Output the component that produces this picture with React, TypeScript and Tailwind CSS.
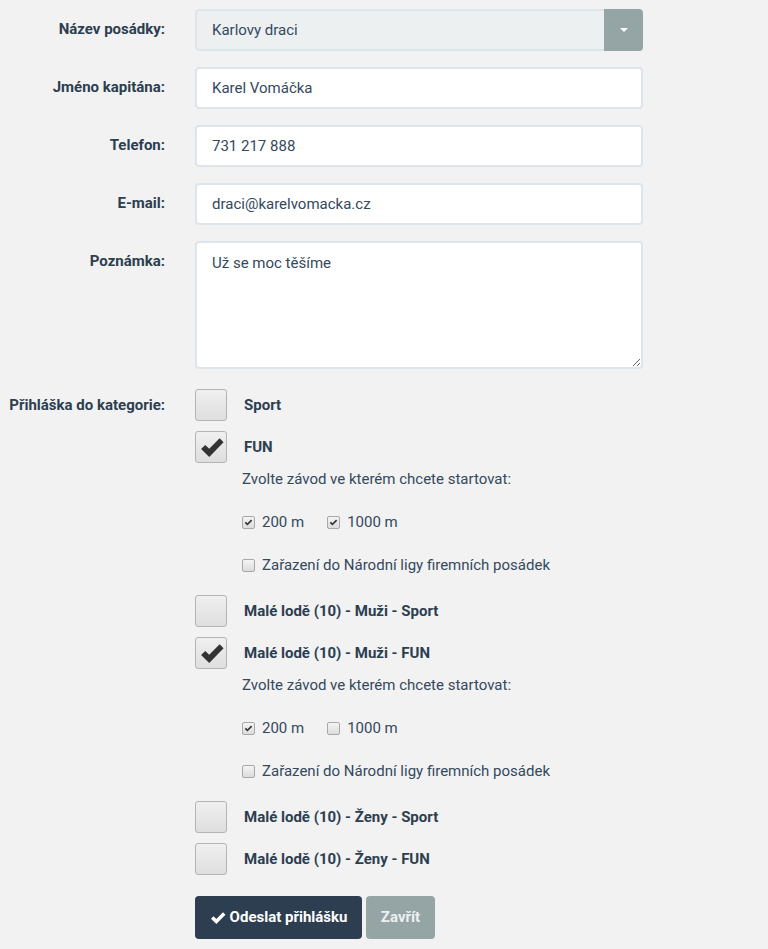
import React from "react";

const font = { fontFamily: "Roboto, 'Noto Sans', sans-serif" };

function BigCheck({ checked }: { checked?: boolean }) {
  return (
    <span className="flex h-[32px] w-[32px] shrink-0 items-center justify-center rounded-[3px] border border-[#b4b4b4] bg-gradient-to-b from-[#f0f0f0] to-[#dedede]">
      {checked && (
        <svg viewBox="0 0 24 24" className="h-[25px] w-[25px]" fill="#333">
          <path d="M2 13.4 L6 9.5 L9.8 13.3 L19.8 3 L23.6 7 L9.8 21 Z" />
        </svg>
      )}
    </span>
  );
}

function SmallCheck({ checked }: { checked?: boolean }) {
  return (
    <span className="flex h-[13px] w-[13px] shrink-0 items-center justify-center rounded-[2px] border border-[#a8a8a8] bg-gradient-to-b from-[#f4f4f4] to-[#dcdcdc]">
      {checked && (
        <svg viewBox="0 0 12 12" className="h-[9px] w-[9px]" fill="#333">
          <path d="M1 6.5 L2.6 5 L4.6 7 L9.4 2 L11 3.6 L4.6 10 Z" />
        </svg>
      )}
    </span>
  );
}

function Row({ label, children }: { label: string; children: React.ReactNode }) {
  return (
    <div className="flex items-start">
      <div className="w-[165px] shrink-0 pt-[10px] text-right text-[15px] font-bold leading-[20px] text-[#2c3e50]">
        {label}
      </div>
      <div className="ml-[30px] w-[448px]">{children}</div>
    </div>
  );
}

const inputCls =
  "block h-[42px] w-full rounded-[4px] border-2 border-[#dce4ec] bg-white px-[15px] text-[15px] text-[#34495e] outline-none";

function Category({ label, checked }: { label: string; checked?: boolean }) {
  return (
    <div className="mt-[10px] flex items-center first:mt-0">
      <BigCheck checked={checked} />
      <span className="ml-[17px] text-[15px] font-bold leading-[20px] text-[#2c3e50]">{label}</span>
    </div>
  );
}

function Races({ k1000 }: { k1000: boolean }) {
  return (
    <div className="pl-[47px] text-[15px] leading-[20px] text-[#34495e]">
      <div className="mt-[6px]">Zvolte závod ve kterém chcete startovat:</div>
      <div className="mt-[23px] flex items-center">
        <SmallCheck checked />
        <span className="ml-[7px]">200 m</span>
        <span className="ml-[23px]">
          <SmallCheck checked={k1000} />
        </span>
        <span className="ml-[7px]">1000 m</span>
      </div>
      <div className="mt-[23px] flex items-center">
        <SmallCheck />
        <span className="ml-[7px]">Zařazení do Národní ligy firemních posádek</span>
      </div>
      <div className="h-[10px]" />
    </div>
  );
}

export default function App() {
  return (
    <div className="min-h-screen bg-[#f2f2f2] pt-[9px]" style={font}>
      <div className="flex flex-col gap-[16px]">
        <Row label="Název posádky:">
          <div className="flex h-[42px] w-full overflow-hidden rounded-[4px]">
            <div className="flex flex-1 items-center rounded-l-[4px] border-2 border-r-0 border-[#dce4ec] bg-[#ecf0f1] px-[15px] text-[15px] text-[#34495e]">
              Karlovy draci
            </div>
            <div className="flex w-[39px] items-center justify-center bg-[#95a5a6]">
              <span className="h-0 w-0 border-x-[4px] border-t-[4px] border-x-transparent border-t-white" />
            </div>
          </div>
        </Row>
        <Row label="Jméno kapitána:">
          <input className={inputCls} defaultValue="Karel Vomáčka" style={font} />
        </Row>
        <Row label="Telefon:">
          <input className={inputCls} defaultValue="731 217 888" style={font} />
        </Row>
        <Row label="E-mail:">
          <input className={inputCls} defaultValue="draci@karelvomacka.cz" style={font} />
        </Row>
        <Row label="Poznámka:">
          <textarea
            className="block h-[128px] w-full rounded-[4px] border-2 border-[#dce4ec] bg-white px-[15px] py-[10px] text-[15px] leading-[20px] text-[#34495e] outline-none"
            defaultValue="Už se moc těšíme"
            style={font}
          />
        </Row>
      </div>

      <div className="mt-[20px] flex items-start">
        <div className="w-[165px] shrink-0 pt-[6px] text-right text-[15px] font-bold leading-[20px] text-[#2c3e50]">
          Přihláška do kategorie:
        </div>
        <div className="ml-[30px] flex flex-col">
          <Category label="Sport" />
          <Category label="FUN" checked />
          <Races k1000 />
          <Category label="Malé lodě (10) - Muži - Sport" />
          <Category label="Malé lodě (10) - Muži - FUN" checked />
          <Races k1000={false} />
          <Category label="Malé lodě (10) - Ženy - Sport" />
          <Category label="Malé lodě (10) - Ženy - FUN" />

          <div className="mt-[21px] flex gap-[4px]">
            <button className="flex h-[43px] w-[167px] items-center justify-center gap-[4px] rounded-[4px] bg-[#2c3e50] text-[15px] font-bold text-white">
              <svg viewBox="0 0 24 24" className="h-[16px] w-[16px]" fill="white">
                <path d="M1.5 13 L5.3 9.3 L9.5 13.5 L19.5 3.5 L23.2 7.2 L9.5 21 Z" />
              </svg>
              Odeslat přihlášku
            </button>
            <button className="h-[43px] w-[69px] rounded-[4px] bg-[#95a5a6] text-[15px] font-bold text-[#ecf0f1]">
              Zavřít
            </button>
          </div>
        </div>
      </div>
    </div>
  );
}
